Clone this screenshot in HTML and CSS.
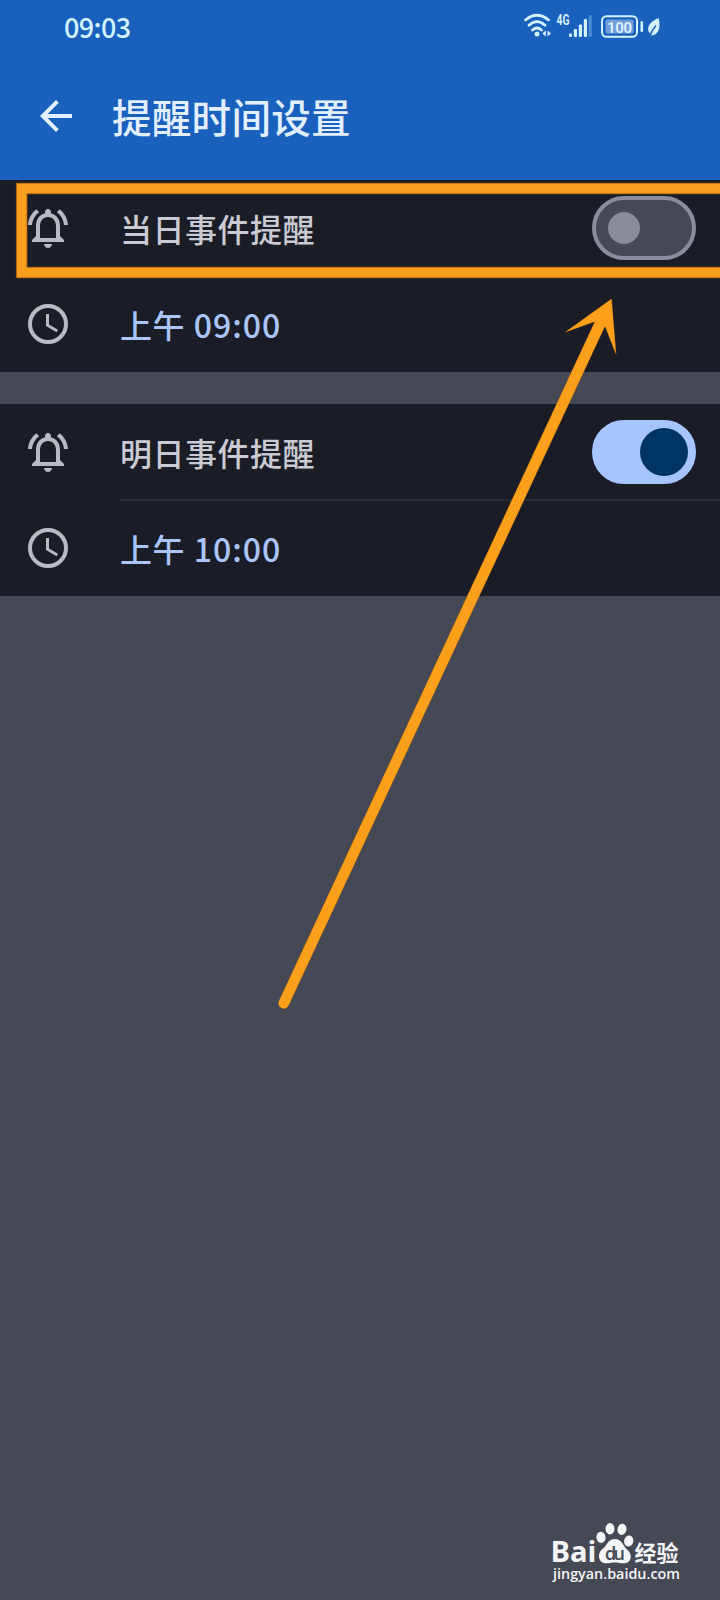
FILE: index.html
```html
<!DOCTYPE html>
<html lang="zh-CN">
<head>
<meta charset="utf-8">
<title>提醒时间设置</title>
<link rel="stylesheet" href="styles.css">
</head>
<body>
<svg class="defs" aria-hidden="true">
  <symbol id="bell" viewBox="0 0 24 24"><path d="M12 22c1.1 0 2-.9 2-2h-4c0 1.1.9 2 2 2zM18 11c0-3.07-1.64-5.64-4.5-6.32V4c0-.83-.67-1.5-1.5-1.5s-1.5.67-1.5 1.5v.68C7.63 5.36 6 7.92 6 11v5l-2 2v1h16v-1l-2-2zm-2 6H8v-6c0-2.48 1.51-4.5 4-4.5s4 2.02 4 4.5zM7.58 4.08L6.15 2.65C3.75 4.48 2.17 7.3 2.03 10.5h2c.15-2.65 1.51-4.97 3.55-6.42zM19.97 10.5h2c-.15-3.2-1.73-6.02-4.12-7.85l-1.42 1.43c2.02 1.45 3.39 3.77 3.54 6.42z"/></symbol>
  <symbol id="clock" viewBox="0 0 24 24"><circle cx="12" cy="12" r="9" fill="none" stroke="currentColor" stroke-width="2"/><path d="M12.5 7H11v6l5.25 3.15.75-1.23-4.5-2.67z"/></symbol>
</svg>
<main class="screen">
  <header class="header">
    <div class="status">
      <span class="status-time">09:03</span>
      <svg class="status-icons" viewBox="0 0 140 40" width="140" height="40">
        <g fill="none" stroke="#d2f3ff" stroke-width="2.7" stroke-linecap="round">
          <path d="M1.500 14Q13 4.500 24.500 14M5 19.300Q13 12 21 19.300M8.500 24Q13 20 17.500 24"/>
        </g>
        <circle cx="13" cy="28" r="2.500" fill="#d2f3ff"/>
        <path d="M21.800 24.500v6l-3.500-3zM23.500 24.500v6l3.500-3z" fill="#d2f3ff"/>
        <text class="network" x="32.500" y="19" textLength="13" lengthAdjust="spacingAndGlyphs">4G</text>
        <g fill="#d2f3ff"><rect x="45" y="27.500" width="3" height="3.500" rx="1"/><rect x="49.800" y="23" width="3.200" height="8" rx="1"/><rect x="54.800" y="18.500" width="3.200" height="12.500" rx="1"/><rect x="59.800" y="13" width="3.200" height="18" rx="1"/></g>
        <rect x="64.700" y="9" width="3" height="22" rx="1" fill="#4d8dd8"/>
        <rect x="78" y="10.200" width="35" height="20.600" rx="4.500" fill="none" stroke="#d2f3ff" stroke-width="2"/>
        <rect x="81.500" y="13.500" width="28" height="14" rx="2" fill="#719edb"/>
        <text class="battery" x="83" y="26.500" textLength="25">100</text>
        <rect x="116.500" y="15" width="2.600" height="11" rx="1.200" fill="#d2f3ff"/>
        <path d="M134.500 12C126 16 123 20 124.500 25.500L127.500 29.500C135 29 137 21 134.500 12z" fill="#d2f3ff"/>
        <path d="M125.500 31C127 26 129 23 132 19.500" fill="none" stroke="#1c60bc" stroke-width="1.400"/>
      </svg>
    </div>
    <div class="appbar">
      <svg class="icon back" viewBox="0 0 24 24"><path d="M20 11H7.830l5.590-5.590L12 4l-8 8 8 8 1.410-1.410L7.830 13H20z"/></svg>
      <h1 class="title">提醒时间设置</h1>
    </div>
  </header>
  <section class="group">
    <div class="row"><svg class="icon"><use href="#bell"/></svg><span class="label">当日事件提醒</span><span class="toggle"><span class="knob"></span></span></div>
    <div class="row"><svg class="icon"><use href="#clock"/></svg><span class="time">上午 <span class="digits">09:00</span></span></div>
  </section>
  <section class="group">
    <div class="row"><svg class="icon"><use href="#bell"/></svg><span class="label">明日事件提醒</span><span class="toggle on"><span class="knob"></span></span></div>
    <div class="row lined"><svg class="icon"><use href="#clock"/></svg><span class="time">上午 <span class="digits">10:00</span></span></div>
  </section>
  <footer class="brand">
    <svg viewBox="0 0 136 66" width="136" height="66">
      <g fill="#f4f5f7">
        <text class="bai" x="2.500" y="40" textLength="46" lengthAdjust="spacingAndGlyphs">Bai</text>
        <ellipse cx="53" cy="15.300" rx="4.600" ry="5.600" transform="rotate(-8 53 15.300)"/>
        <ellipse cx="62" cy="6.700" rx="4.500" ry="5.700"/>
        <ellipse cx="74" cy="7.300" rx="4.500" ry="5.700" transform="rotate(10 74 7.300)"/>
        <ellipse cx="80.700" cy="19" rx="4.600" ry="5.600" transform="rotate(12 80.700 19)"/>
        <path d="M67 17C59.500 17 59 24 54.500 27C49 31 50 41.300 58 41.300C62 41.300 63 40.500 67 40.500C71 40.500 72 41.300 76 41.300C84 41.300 84.500 32 79.500 28C74.500 24 74.500 17 67 17z"/>
        <text class="du" x="57" y="37.500" textLength="20">du</text>
        <text class="jing" x="86.500" y="39" textLength="44">经验</text>
        <text class="url" x="5" y="56.700" textLength="127" lengthAdjust="spacingAndGlyphs">jingyan.baidu.com</text>
      </g>
    </svg>
  </footer>
  <svg class="annotation" viewBox="0 0 720 1600" width="720" height="1600">
    <path d="M730 188.500H21.700V272.500H730" fill="none" stroke="#8a4c12" stroke-width="11.600"/>
    <path d="M730 188.500H21.700V272.500H730" fill="none" stroke="#f89e1f" stroke-width="10"/>
    <path d="M611.500 299L565.500 332L595 321.500L279 1001A5 5 0 0 0 288.500 1005.500L605 326L616 354z" fill="#fc9f1b" stroke="#8a4c12" stroke-width="1" paint-order="stroke" stroke-opacity=".7"/>
  </svg>
</main>
</body>
</html>
```
FILE: styles.css
```css
* { box-sizing: border-box; }
body { margin: 0; background: #454955; font-family: "Noto Sans CJK SC", sans-serif; }
.defs { position: absolute; width: 0; height: 0; }
.screen { position: relative; display: flex; flex-direction: column; width: 720px; height: 1600px; overflow: hidden; background: #454955; }
.header { height: 180px; background: #1a60bd; }
.status { display: flex; justify-content: space-between; height: 56px; padding: 6px 56px 0 64px; }
.status-time { color: #d2f3ff; font: 500 27px/42px "Noto Sans CJK SC", sans-serif; letter-spacing: -.6px; }
.network { fill: #d2f3ff; font: 700 14px "Roboto", sans-serif; }
.battery { fill: #e2f5ff; font: 500 15px "Roboto", sans-serif; }
.appbar { display: flex; align-items: center; gap: 32px; height: 120px; padding-left: 32px; }
.icon { display: block; flex: none; width: 48px; height: 48px; color: #b9bac6; fill: currentColor; }
.back { color: #e1efff; }
.title { margin: 0; color: #e1efff; font-size: 39.500px; font-weight: 500; line-height: 60px; letter-spacing: .3px; }
.group { margin-bottom: 32px; background: #1b1d26; }
.row { display: flex; align-items: center; height: 96px; padding: 0 24px; }
.row > .icon { margin-right: 48px; }
.label, .time { font-size: 32px; font-weight: 500; line-height: 48px; letter-spacing: .5px; }
.label { color: #c9cad3; }
.time { color: #abc5fb; word-spacing: 1px; }
.digits { letter-spacing: 1px; }
.toggle { display: flex; align-items: center; width: 104px; height: 64px; margin-left: auto; padding: 0 12px; border: 4px solid #898d9b; border-radius: 32px; background: #454955; }
.knob { width: 32px; height: 32px; border-radius: 50%; background: #898d9b; }
.toggle.on { justify-content: flex-end; padding: 0 4px; border-color: #a6c5ff; background: #a6c5ff; }
.toggle.on .knob { width: 48px; height: 48px; background: #003366; }
.lined { position: relative; }
.lined::before { content: ""; position: absolute; top: -1px; right: 0; left: 120px; height: 2px; background: #2a2c35; }
.brand { margin: auto 36px 12px auto; height: 66px; }
.bai { font: 700 28.500px "Open Sans", sans-serif; }
.du { fill: #454955; font: 600 18px "Open Sans", sans-serif; }
.jing { font: 700 22px "Noto Sans CJK SC", sans-serif; }
.url { font: 600 15px "Open Sans", sans-serif; }
.annotation { position: absolute; inset: 0; pointer-events: none; }
```
